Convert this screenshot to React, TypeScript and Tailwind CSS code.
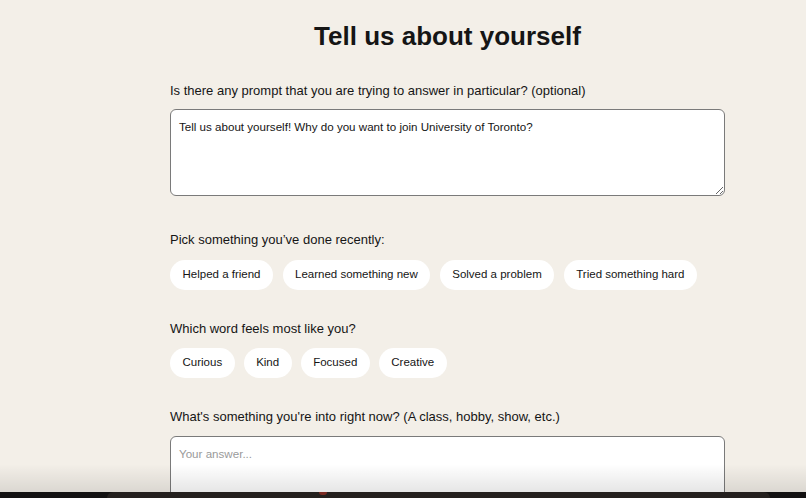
import { useState } from "react";

const doneOptions = ["Helped a friend", "Learned something new", "Solved a problem", "Tried something hard"];
const wordOptions = ["Curious", "Kind", "Focused", "Creative"];

function Chip({ label, active, onClick }: { label: string; active: boolean; onClick: () => void }) {
  return (
    <button
      type="button"
      onClick={onClick}
      className={`h-[30px] px-[12.5px] rounded-full text-[11.5px] leading-none ${
        active ? "bg-[#1f1f1f] text-white" : "bg-white text-[#151515]"
      }`}
    >
      {label}
    </button>
  );
}

export default function App() {
  const [done, setDone] = useState<string | null>(null);
  const [word, setWord] = useState<string | null>(null);

  return (
    <div
      className="relative h-[498px] overflow-hidden bg-[#f3efe8] text-[#151515]"
      style={{ fontFamily: '"Liberation Sans", Arial, sans-serif' }}
    >
      <div className="ml-[170px] w-[555px] flex flex-col pt-[19px]">
        <h1 className="text-center text-[26px] leading-[34px] font-bold">Tell us about yourself</h1>

        <label className="mt-[28px] text-[13px] leading-[20px]">
          Is there any prompt that you are trying to answer in particular? (optional)
        </label>
        <textarea
          className="mt-[8px] h-[87px] w-full rounded-[6px] border border-[#7a7a7a] bg-white px-[8px] py-[9px] text-[11.6px] leading-[16px] text-[#151515] outline-none"
          defaultValue="Tell us about yourself! Why do you want to join University of Toronto?"
        />

        <p className="mt-[34px] text-[13px] leading-[20px]">Pick something you’ve done recently:</p>
        <div className="mt-[10px] flex gap-[9.5px]">
          {doneOptions.map((o) => (
            <Chip key={o} label={o} active={done === o} onClick={() => setDone(done === o ? null : o)} />
          ))}
        </div>

        <p className="mt-[29px] text-[13px] leading-[20px]">Which word feels most like you?</p>
        <div className="mt-[9px] flex gap-[9px]">
          {wordOptions.map((o) => (
            <Chip key={o} label={o} active={word === o} onClick={() => setWord(word === o ? null : o)} />
          ))}
        </div>

        <label className="mt-[29px] text-[13px] leading-[20px]">
          What's something you're into right now? (A class, hobby, show, etc.)
        </label>
        <textarea
          className="mt-[9px] h-[87px] w-full rounded-[6px] border border-[#7a7a7a] bg-white px-[8px] py-[9px] text-[11.6px] leading-[16px] outline-none placeholder:text-[#9a9a9a]"
          placeholder="Your answer..."
        />
      </div>

      {/* dock edge at the bottom of the screen */}
      <div className="pointer-events-none absolute inset-x-0 bottom-[6px] h-[28px] bg-gradient-to-b from-transparent to-black/10" />
      <div className="absolute inset-x-0 bottom-0 h-[6px] bg-[#121111]">
        <div className="ml-[107px] mr-[36px] h-full rounded-t-[10px] bg-[#24201e]">
          <div className="ml-[212px] h-[3px] w-[8px] rounded-b-full bg-[#7a2a22]" />
        </div>
      </div>
    </div>
  );
}
